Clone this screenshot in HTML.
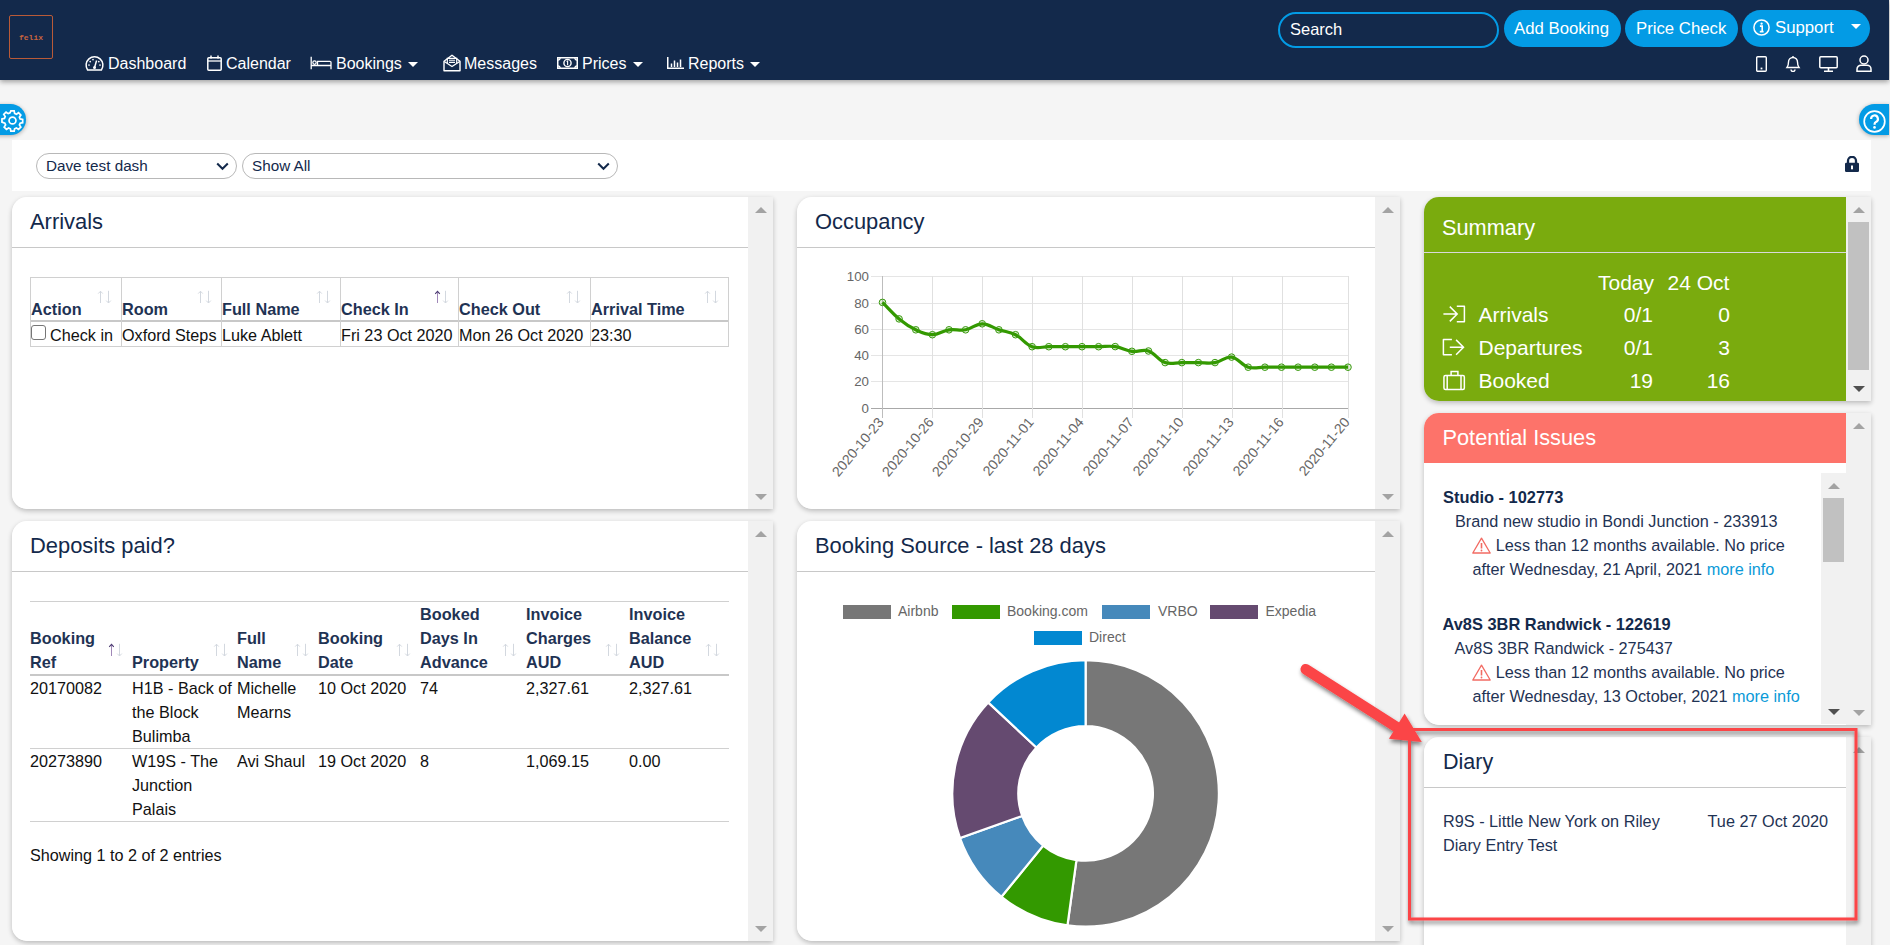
<!DOCTYPE html>
<html><head><meta charset="utf-8">
<style>
*{box-sizing:border-box}
html,body{margin:0;padding:0}
body{width:1890px;height:945px;overflow:hidden;background:#f5f5f5;font-family:"Liberation Sans",sans-serif;position:relative;color:#111}
.a{position:absolute;white-space:nowrap}
#hdr{position:absolute;left:0;top:0;width:1889px;height:80px;background:#13294b;box-shadow:0 2px 5px rgba(0,0,0,.35)}
.nav{position:absolute;top:54px;height:20px;line-height:20px;font-size:16px;color:#fff}
.btn{position:absolute;top:10px;height:37px;border-radius:19px;background:#039be5;color:#fff;font-size:16.75px;line-height:37px}
.caret{position:absolute;width:0;height:0;border-left:5px solid transparent;border-right:5px solid transparent;border-top:5px solid #fff}
.pnl{position:absolute;box-shadow:0 2px 5px rgba(0,0,0,.24);border-radius:15px 0 0 15px}
.pc{position:absolute;left:0;top:0;bottom:0;background:#fff;border-radius:15px 0 0 15px;overflow:hidden}
.sb{position:absolute;top:0;bottom:0;right:0;width:25px;background:#f1f1f1}
.up{position:absolute;left:6.5px;top:9.5px;width:0;height:0;border-left:6px solid transparent;border-right:6px solid transparent;border-bottom:6.5px solid #a3a3a3}
.dn{position:absolute;left:6.5px;bottom:9.5px;width:0;height:0;border-left:6px solid transparent;border-right:6px solid transparent;border-top:6.5px solid #a3a3a3}
.ph{position:absolute;left:0;right:0;top:0;height:51px;border-bottom:1px solid #c8c8c8}
.pt{position:absolute;left:18px;font-size:21.9px;line-height:22px;color:#13294b}
.th{position:absolute;font-weight:bold;font-size:16.25px;line-height:24px;color:#1f3354;margin-top:1px}
.td{position:absolute;font-size:16.2px;line-height:24px;color:#111;margin-top:1px}
.hl{position:absolute;height:1px;background:#d0d0d0}
.vl{position:absolute;width:1px;background:#d0d0d0}
</style></head><body>

<div id="hdr">
  <!-- logo -->
  <div class="a" style="left:9px;top:15px;width:44px;height:44px;border:1.6px solid #b95a38;border-radius:2px"></div>
  <div class="a" style="left:9px;top:31.5px;width:44px;text-align:center;font-family:'Liberation Mono',monospace;font-size:8px;line-height:12px;color:#c8643f;font-weight:bold">felix</div>

  <!-- nav -->
  <svg class="a" style="left:85px;top:55px" width="19" height="16" viewBox="0 0 19 16"><path d="M2.6 15 A8.4 8.4 0 1 1 16.4 15 Z" fill="none" stroke="#fff" stroke-width="1.5" stroke-linejoin="round"/><path d="M9.5 12.6 L11.6 5.5" stroke="#fff" stroke-width="1.5"/><circle cx="9.5" cy="12.6" r="1.5" fill="#fff"/><circle cx="5.2" cy="6.6" r=".85" fill="#fff"/><circle cx="8" cy="4.6" r=".85" fill="#fff"/><circle cx="4" cy="10" r=".85" fill="#fff"/><circle cx="15" cy="10" r=".85" fill="#fff"/><circle cx="13.8" cy="6.6" r=".85" fill="#fff"/></svg>
  <div class="nav" style="left:108px">Dashboard</div>
  <svg class="a" style="left:207px;top:55px" width="15" height="16" viewBox="0 0 15 16"><rect x=".8" y="2.8" width="13.4" height="12.4" rx="1" fill="none" stroke="#fff" stroke-width="1.5"/><path d="M1 6h13" stroke="#fff" stroke-width="1.3"/><path d="M4 .5v3M11 .5v3" stroke="#fff" stroke-width="1.5"/></svg>
  <div class="nav" style="left:226px">Calendar</div>
  <svg class="a" style="left:310px;top:56px" width="22" height="14" viewBox="0 0 22 14"><path d="M1.2 .8v12.5M1.2 9.5h19.8M21 13.3V6.5a1.2 1.2 0 0 0-1.2-1.2H7.5v4.2" fill="none" stroke="#fff" stroke-width="1.3"/><circle cx="4.5" cy="6.6" r="1.7" fill="none" stroke="#fff" stroke-width="1.2"/></svg>
  <div class="nav" style="left:336px">Bookings</div>
  <div class="caret" style="left:408px;top:62px"></div>
  <svg class="a" style="left:443px;top:54px" width="18" height="18" viewBox="0 0 18 18"><path d="M1 7.2 L9 1.2 L17 7.2 V16.8 H1 Z" fill="none" stroke="#fff" stroke-width="1.4" stroke-linejoin="round"/><path d="M1.3 7.5 L9 12.5 L16.7 7.5" fill="none" stroke="#fff" stroke-width="1.3"/><path d="M4.3 9.3 V4.3 H13.7 V9.3" fill="none" stroke="#fff" stroke-width="1.2"/><path d="M6 6.2H12M6 8.4H12" stroke="#fff" stroke-width="1.1"/></svg>
  <div class="nav" style="left:464px">Messages</div>
  <svg class="a" style="left:557px;top:57px" width="21" height="12" viewBox="0 0 21 12"><rect x=".75" y=".75" width="19.5" height="10.5" fill="none" stroke="#fff" stroke-width="1.5"/><path d="M.8 3.2A2.5 2.5 0 0 0 3.2 .8M17.8 .8A2.5 2.5 0 0 0 20.2 3.2M.8 8.8A2.5 2.5 0 0 1 3.2 11.2M17.8 11.2A2.5 2.5 0 0 1 20.2 8.8" fill="none" stroke="#fff" stroke-width="1.2"/><circle cx="10.5" cy="6" r="3.6" fill="none" stroke="#fff" stroke-width="1.4"/><path d="M9.6 4.6l1-.6V8.2" fill="none" stroke="#fff" stroke-width="1.1"/></svg>
  <div class="nav" style="left:582px">Prices</div>
  <div class="caret" style="left:633px;top:62px"></div>
  <svg class="a" style="left:667px;top:57px" width="17" height="12" viewBox="0 0 17 12"><path d="M.75 0v11.25H17" fill="none" stroke="#fff" stroke-width="1.5"/><path d="M4.5 10V6.5M7.5 10V3.5M10.5 10V5.5M13.5 10V2.5" stroke="#fff" stroke-width="1.5"/></svg>
  <div class="nav" style="left:688px">Reports</div>
  <div class="caret" style="left:750px;top:62px"></div>

  <!-- right side -->
  <div class="a" style="left:1278px;top:12px;width:221px;height:36px;border:2px solid #039be5;border-radius:18px"></div>
  <div class="a" style="left:1290px;top:19px;font-size:16.5px;line-height:20px;color:#fff">Search</div>
  <div class="btn" style="left:1504px;width:117px;padding-left:10px">Add Booking</div>
  <div class="btn" style="left:1625px;width:113px;padding-left:11px">Price Check</div>
  <div class="btn" style="left:1742px;width:128px"></div>
  <svg class="a" style="left:1753px;top:19.3px" width="17" height="17" viewBox="0 0 17 17"><circle cx="8.5" cy="8.5" r="7.6" fill="none" stroke="#fff" stroke-width="1.5"/><path d="M6.9 7.1H9.2V12.6M6.8 12.6H10.6" fill="none" stroke="#fff" stroke-width="1.6"/><circle cx="8.6" cy="4.7" r="1.15" fill="#fff"/></svg>
  <div class="a" style="left:1775px;top:18px;font-size:16.75px;line-height:20px;color:#fff">Support</div>
  <div class="caret" style="left:1851px;top:24px"></div>

  <svg class="a" style="left:1756px;top:56px" width="11" height="16" viewBox="0 0 11 16"><rect x=".7" y=".7" width="9.6" height="14.6" rx="1" fill="none" stroke="#fff" stroke-width="1.4"/><rect x="4.6" y="11.6" width="1.8" height="1.8" fill="#fff"/></svg>
  <svg class="a" style="left:1785px;top:55px" width="16" height="17" viewBox="0 0 16 17"><path d="M2 12.5c1.2-1.5 1.5-3 1.5-5.5a4.5 4.5 0 0 1 9 0c0 2.5.3 4 1.5 5.5Z" fill="none" stroke="#fff" stroke-width="1.4"/><path d="M6 14.5a2 2 0 0 0 4 0" fill="none" stroke="#fff" stroke-width="1.4"/><path d="M8 1v1.5" stroke="#fff" stroke-width="1.4"/></svg>
  <svg class="a" style="left:1819px;top:56px" width="19" height="16" viewBox="0 0 19 16"><rect x=".8" y=".8" width="17.4" height="11" rx="1" fill="none" stroke="#fff" stroke-width="1.5"/><path d="M9.5 12v3M5 15.2h9" stroke="#fff" stroke-width="1.6"/></svg>
  <svg class="a" style="left:1856px;top:55px" width="16" height="17" viewBox="0 0 16 17"><circle cx="8" cy="5" r="4" fill="none" stroke="#fff" stroke-width="1.5"/><path d="M1 16.2v-2a4 4 0 0 1 4-4h6a4 4 0 0 1 4 4v2Z" fill="none" stroke="#fff" stroke-width="1.5"/></svg>
</div>

<!-- gear & help -->
<div class="a" style="left:-16px;top:104px;width:42px;height:31px;border-radius:16px;background:#039be5;box-shadow:0 1px 4px rgba(0,0,0,.3)"></div>
<svg class="a" style="left:0.5px;top:109px" width="23" height="23" viewBox="0 0 24 24"><path fill="none" stroke="#fff" stroke-width="1.8" d="M10.3 2h3.4l.5 2.6 1.9.8 2.2-1.5 2.4 2.4-1.5 2.2.8 1.9 2.6.5v3.4l-2.6.5-.8 1.9 1.5 2.2-2.4 2.4-2.2-1.5-1.9.8-.5 2.6h-3.4l-.5-2.6-1.9-.8-2.2 1.5-2.4-2.4 1.5-2.2-.8-1.9L1 13.7v-3.4l2.6-.5.8-1.9-1.5-2.2 2.4-2.4 2.2 1.5 1.9-.8Z"/><circle cx="12" cy="12" r="3.6" fill="none" stroke="#fff" stroke-width="1.8"/></svg>
<div class="a" style="left:1859px;top:104px;width:30px;height:31px;border-radius:16px 0 0 16px;background:#039be5;box-shadow:0 1px 4px rgba(0,0,0,.3)"></div>
<svg class="a" style="left:1863px;top:109.5px" width="23" height="23" viewBox="0 0 23 23"><circle cx="11.5" cy="11.5" r="10.3" fill="none" stroke="#fff" stroke-width="1.7"/><path d="M8.1 8.9a3.4 3.4 0 1 1 4.9 3c-.9.5-1.4 1-1.4 2v.9" fill="none" stroke="#fff" stroke-width="2.2"/><circle cx="11.5" cy="17.4" r="1.3" fill="#fff"/></svg>

<!-- filter bar -->
<div class="a" style="left:12px;top:140px;width:1859px;height:51px;background:#fff"></div>
<div class="a" style="left:36px;top:153px;width:201px;height:26px;border:1px solid #b8b8b8;border-radius:13px;background:#fff"></div>
<div class="a" style="left:46px;top:156px;font-size:15.25px;line-height:20px;color:#13294b">Dave test dash</div>
<svg class="a" style="left:216px;top:162px" width="13" height="9" viewBox="0 0 13 9"><path d="M1.2 1.5l5.3 5.3 5.3-5.3" fill="none" stroke="#13294b" stroke-width="2"/></svg>
<div class="a" style="left:242px;top:153px;width:376px;height:26px;border:1px solid #b8b8b8;border-radius:13px;background:#fff"></div>
<div class="a" style="left:252px;top:156px;font-size:15.25px;line-height:20px;color:#13294b">Show All</div>
<svg class="a" style="left:597px;top:162px" width="13" height="9" viewBox="0 0 13 9"><path d="M1.2 1.5l5.3 5.3 5.3-5.3" fill="none" stroke="#13294b" stroke-width="2"/></svg>
<svg class="a" style="left:1845px;top:156px" width="14" height="16" viewBox="0 0 14 16"><path d="M3 7V4.8a4 4 0 0 1 8 0V7" fill="none" stroke="#13294b" stroke-width="2.3"/><rect x="0" y="6.8" width="14" height="9.2" rx="1.2" fill="#13294b"/><rect x="6" y="9.5" width="2" height="3.8" fill="#fff"/></svg>

<div class="pnl" style="left:12px;top:197px;width:761px;height:312px"><div class="pc" style="width:736px">
<div class="ph"><div class="pt" style="top:14px">Arrivals</div></div>
<div class="hl" style="left:18px;top:80px;width:699px"></div>
<div class="hl" style="left:18px;top:123px;width:699px;height:2px;background:#c8c8c8"></div>
<div class="hl" style="left:18px;top:149px;width:699px"></div>
<div class="vl" style="left:18px;top:80px;height:70px"></div>
<div class="vl" style="left:109px;top:80px;height:70px"></div>
<div class="vl" style="left:209px;top:80px;height:70px"></div>
<div class="vl" style="left:328px;top:80px;height:70px"></div>
<div class="vl" style="left:446px;top:80px;height:70px"></div>
<div class="vl" style="left:578px;top:80px;height:70px"></div>
<div class="vl" style="left:716px;top:80px;height:70px"></div>
<div class="th" style="left:19px;top:99px">Action</div>
<svg class="a" style="left:85px;top:93px" width="15" height="14" viewBox="0 0 15 14"><path d="M3.5 13V1.2M1.2 3.6l2.3-2.4 2.3 2.4" fill="none" stroke="#d3d8df" stroke-width="1"/><path d="M11.5 .8v12.2M9.2 10.6l2.3 2.4 2.3-2.4" fill="none" stroke="#d3d8df" stroke-width="1"/></svg>
<div class="th" style="left:110px;top:99px">Room</div>
<svg class="a" style="left:185px;top:93px" width="15" height="14" viewBox="0 0 15 14"><path d="M3.5 13V1.2M1.2 3.6l2.3-2.4 2.3 2.4" fill="none" stroke="#d3d8df" stroke-width="1"/><path d="M11.5 .8v12.2M9.2 10.6l2.3 2.4 2.3-2.4" fill="none" stroke="#d3d8df" stroke-width="1"/></svg>
<div class="th" style="left:210px;top:99px">Full Name</div>
<svg class="a" style="left:304px;top:93px" width="15" height="14" viewBox="0 0 15 14"><path d="M3.5 13V1.2M1.2 3.6l2.3-2.4 2.3 2.4" fill="none" stroke="#d3d8df" stroke-width="1"/><path d="M11.5 .8v12.2M9.2 10.6l2.3 2.4 2.3-2.4" fill="none" stroke="#d3d8df" stroke-width="1"/></svg>
<div class="th" style="left:329px;top:99px">Check In</div>
<svg class="a" style="left:422px;top:93px" width="15" height="14" viewBox="0 0 15 14"><path d="M3.5 13V1.6" fill="none" stroke="#a088b8" stroke-width="1"/><path d="M1.2 3.8l2.3-2.4 2.3 2.4" fill="none" stroke="#4a3a70" stroke-width="1.1"/><path d="M11.5 .8v12.2M9.2 10.6l2.3 2.4 2.3-2.4" fill="none" stroke="#d3d8df" stroke-width="1"/></svg>
<div class="th" style="left:447px;top:99px">Check Out</div>
<svg class="a" style="left:554px;top:93px" width="15" height="14" viewBox="0 0 15 14"><path d="M3.5 13V1.2M1.2 3.6l2.3-2.4 2.3 2.4" fill="none" stroke="#d3d8df" stroke-width="1"/><path d="M11.5 .8v12.2M9.2 10.6l2.3 2.4 2.3-2.4" fill="none" stroke="#d3d8df" stroke-width="1"/></svg>
<div class="th" style="left:579px;top:99px">Arrival Time</div>
<svg class="a" style="left:692px;top:93px" width="15" height="14" viewBox="0 0 15 14"><path d="M3.5 13V1.2M1.2 3.6l2.3-2.4 2.3 2.4" fill="none" stroke="#d3d8df" stroke-width="1"/><path d="M11.5 .8v12.2M9.2 10.6l2.3 2.4 2.3-2.4" fill="none" stroke="#d3d8df" stroke-width="1"/></svg>
<div class="a" style="left:19px;top:128px;width:15px;height:15px;border:1px solid #767676;border-radius:3px;background:#fff"></div>
<div class="td" style="left:38px;top:125px">Check in</div>
<div class="td" style="left:110px;top:125px">Oxford Steps</div>
<div class="td" style="left:210px;top:125px">Luke Ablett</div>
<div class="td" style="left:329px;top:125px">Fri 23 Oct 2020</div>
<div class="td" style="left:447px;top:125px">Mon 26 Oct 2020</div>
<div class="td" style="left:579px;top:125px">23:30</div>
</div><div class="sb" style="left:736px"><div class="up"></div><div class="dn"></div></div></div>
<div class="pnl" style="left:12px;top:521px;width:761px;height:420px"><div class="pc" style="width:736px">
<div class="ph"><div class="pt" style="top:14px">Deposits paid?</div></div>
<div class="hl" style="left:18px;top:80px;width:699px"></div>
<div class="hl" style="left:18px;top:153px;width:699px;height:2px;background:#c8c8c8"></div>
<div class="hl" style="left:18px;top:227px;width:699px"></div>
<div class="hl" style="left:18px;top:300px;width:699px"></div>
<div class="th" style="margin-top:0;left:18px;top:105px">Booking</div>
<div class="th" style="margin-top:0;left:18px;top:129px">Ref</div>
<svg class="a" style="left:96px;top:122px" width="15" height="14" viewBox="0 0 15 14"><path d="M3.5 13V1.6" fill="none" stroke="#a088b8" stroke-width="1"/><path d="M1.2 3.8l2.3-2.4 2.3 2.4" fill="none" stroke="#4a3a70" stroke-width="1.1"/><path d="M11.5 .8v12.2M9.2 10.6l2.3 2.4 2.3-2.4" fill="none" stroke="#d3d8df" stroke-width="1"/></svg>
<div class="th" style="margin-top:0;left:120px;top:129px">Property</div>
<svg class="a" style="left:201px;top:122px" width="15" height="14" viewBox="0 0 15 14"><path d="M3.5 13V1.2M1.2 3.6l2.3-2.4 2.3 2.4" fill="none" stroke="#d3d8df" stroke-width="1"/><path d="M11.5 .8v12.2M9.2 10.6l2.3 2.4 2.3-2.4" fill="none" stroke="#d3d8df" stroke-width="1"/></svg>
<div class="th" style="margin-top:0;left:225px;top:105px">Full</div>
<div class="th" style="margin-top:0;left:225px;top:129px">Name</div>
<svg class="a" style="left:282px;top:122px" width="15" height="14" viewBox="0 0 15 14"><path d="M3.5 13V1.2M1.2 3.6l2.3-2.4 2.3 2.4" fill="none" stroke="#d3d8df" stroke-width="1"/><path d="M11.5 .8v12.2M9.2 10.6l2.3 2.4 2.3-2.4" fill="none" stroke="#d3d8df" stroke-width="1"/></svg>
<div class="th" style="margin-top:0;left:306px;top:105px">Booking</div>
<div class="th" style="margin-top:0;left:306px;top:129px">Date</div>
<svg class="a" style="left:384px;top:122px" width="15" height="14" viewBox="0 0 15 14"><path d="M3.5 13V1.2M1.2 3.6l2.3-2.4 2.3 2.4" fill="none" stroke="#d3d8df" stroke-width="1"/><path d="M11.5 .8v12.2M9.2 10.6l2.3 2.4 2.3-2.4" fill="none" stroke="#d3d8df" stroke-width="1"/></svg>
<div class="th" style="margin-top:0;left:408px;top:81px">Booked</div>
<div class="th" style="margin-top:0;left:408px;top:105px">Days In</div>
<div class="th" style="margin-top:0;left:408px;top:129px">Advance</div>
<svg class="a" style="left:490px;top:122px" width="15" height="14" viewBox="0 0 15 14"><path d="M3.5 13V1.2M1.2 3.6l2.3-2.4 2.3 2.4" fill="none" stroke="#d3d8df" stroke-width="1"/><path d="M11.5 .8v12.2M9.2 10.6l2.3 2.4 2.3-2.4" fill="none" stroke="#d3d8df" stroke-width="1"/></svg>
<div class="th" style="margin-top:0;left:514px;top:81px">Invoice</div>
<div class="th" style="margin-top:0;left:514px;top:105px">Charges</div>
<div class="th" style="margin-top:0;left:514px;top:129px">AUD</div>
<svg class="a" style="left:593px;top:122px" width="15" height="14" viewBox="0 0 15 14"><path d="M3.5 13V1.2M1.2 3.6l2.3-2.4 2.3 2.4" fill="none" stroke="#d3d8df" stroke-width="1"/><path d="M11.5 .8v12.2M9.2 10.6l2.3 2.4 2.3-2.4" fill="none" stroke="#d3d8df" stroke-width="1"/></svg>
<div class="th" style="margin-top:0;left:617px;top:81px">Invoice</div>
<div class="th" style="margin-top:0;left:617px;top:105px">Balance</div>
<div class="th" style="margin-top:0;left:617px;top:129px">AUD</div>
<svg class="a" style="left:693px;top:122px" width="15" height="14" viewBox="0 0 15 14"><path d="M3.5 13V1.2M1.2 3.6l2.3-2.4 2.3 2.4" fill="none" stroke="#d3d8df" stroke-width="1"/><path d="M11.5 .8v12.2M9.2 10.6l2.3 2.4 2.3-2.4" fill="none" stroke="#d3d8df" stroke-width="1"/></svg>
<div class="td" style="margin-top:0;left:18px;top:155px">20170082</div>
<div class="td" style="margin-top:0;left:120px;top:155px">H1B - Back of</div>
<div class="td" style="margin-top:0;left:120px;top:179px">the Block</div>
<div class="td" style="margin-top:0;left:120px;top:203px">Bulimba</div>
<div class="td" style="margin-top:0;left:225px;top:155px">Michelle</div>
<div class="td" style="margin-top:0;left:225px;top:179px">Mearns</div>
<div class="td" style="margin-top:0;left:306px;top:155px">10 Oct 2020</div>
<div class="td" style="margin-top:0;left:408px;top:155px">74</div>
<div class="td" style="margin-top:0;left:514px;top:155px">2,327.61</div>
<div class="td" style="margin-top:0;left:617px;top:155px">2,327.61</div>
<div class="td" style="margin-top:0;left:18px;top:228px">20273890</div>
<div class="td" style="margin-top:0;left:120px;top:228px">W19S - The</div>
<div class="td" style="margin-top:0;left:120px;top:252px">Junction</div>
<div class="td" style="margin-top:0;left:120px;top:276px">Palais</div>
<div class="td" style="margin-top:0;left:225px;top:228px">Avi Shaul</div>
<div class="td" style="margin-top:0;left:306px;top:228px">19 Oct 2020</div>
<div class="td" style="margin-top:0;left:408px;top:228px">8</div>
<div class="td" style="margin-top:0;left:514px;top:228px">1,069.15</div>
<div class="td" style="margin-top:0;left:617px;top:228px">0.00</div>
<div class="td" style="margin-top:0;left:18px;top:322px">Showing 1 to 2 of 2 entries</div>
</div><div class="sb" style="left:736px"><div class="up"></div><div class="dn"></div></div></div>
<div class="pnl" style="left:797px;top:197px;width:603px;height:312px"><div class="pc" style="width:578px">
<div class="ph"><div class="pt" style="top:14px">Occupancy</div></div>
</div><div class="sb" style="left:578px"><div class="up"></div><div class="dn"></div></div></div>
<div class="pnl" style="left:797px;top:521px;width:603px;height:420px"><div class="pc" style="width:578px">
<div class="ph"><div class="pt" style="top:14px">Booking Source - last 28 days</div></div>
</div><div class="sb" style="left:578px"><div class="up"></div><div class="dn"></div></div></div>
<div class="pnl" style="left:1424px;top:197px;width:447px;height:204px"><div class="pc" style="width:422px;background:#7aab0e;border-radius:15px 0 0 15px">
<div class="a" style="left:18px;top:19.3px;font-size:21.75px;line-height:24px;color:#fff">Summary</div>
<div class="a" style="left:0;top:55px;width:422px;height:1px;background:#d9d9d9"></div>
</div><div class="sb" style="left:422px"><div class="up"></div><div class="a" style="left:2px;top:25px;width:21px;height:148px;background:#c1c1c1"></div><div class="dn" style="border-top-color:#505050"></div></div></div>
<div class="pnl" style="left:1424px;top:413px;width:447px;height:312px"><div class="pc" style="width:422px;border-radius:15px 0 0 15px">
<div class="a" style="left:0;top:0;width:422px;height:50px;background:#fd736a"></div>
<div class="a" style="left:18.5px;top:13px;font-size:21.75px;line-height:24px;color:#fff">Potential Issues</div>
<div class="a" style="left:397px;top:60px;width:25px;height:251px;background:#f1f1f1"><div class="up" style="left:7px;top:10px"></div><div class="a" style="left:2px;top:25px;width:21px;height:64px;background:#c1c1c1"></div><div class="dn" style="border-top-color:#505050;bottom:9px"></div></div>
</div><div class="sb" style="left:422px"><div class="up"></div><div class="dn" style="bottom:9px"></div></div></div>
<div class="pnl" style="left:1424px;top:737px;width:447px;height:240px"><div class="pc" style="width:422px;border-radius:15px 0 0 15px">
<div class="ph" style="height:51px"></div>
</div><div class="sb" style="left:422px"><div class="up"></div></div></div>
<!--PANELS-->
<div class="a" style="left:1598px;top:270.5px;font-size:21px;line-height:24px;color:#fff;">Today</div>
<div class="a" style="left:1667.5px;top:270.5px;font-size:21px;line-height:24px;color:#fff;">24 Oct</div>
<div class="a" style="left:1478.5px;top:303.0px;font-size:21px;line-height:24px;color:#fff;">Arrivals</div>
<div class="a" style="right:237px;top:303.0px;font-size:21px;line-height:24px;color:#fff;">0/1</div>
<div class="a" style="right:160px;top:303.0px;font-size:21px;line-height:24px;color:#fff;">0</div>
<div class="a" style="left:1478.5px;top:336.1px;font-size:21px;line-height:24px;color:#fff;">Departures</div>
<div class="a" style="right:237px;top:336.1px;font-size:21px;line-height:24px;color:#fff;">0/1</div>
<div class="a" style="right:160px;top:336.1px;font-size:21px;line-height:24px;color:#fff;">3</div>
<div class="a" style="left:1478.5px;top:369.1px;font-size:21px;line-height:24px;color:#fff;">Booked</div>
<div class="a" style="right:237px;top:369.1px;font-size:21px;line-height:24px;color:#fff;">19</div>
<div class="a" style="right:160px;top:369.1px;font-size:21px;line-height:24px;color:#fff;">16</div>
<svg class="a" style="left:1442px;top:304px" width="24" height="20" viewBox="0 0 24 20"><path d="M1.4 10H15.3M7.8 2.6 15.2 10 7.8 17.4" fill="none" stroke="#fff" stroke-width="1.5"/><path d="M14.8 2.2H22.4V17.8H14.8" fill="none" stroke="#fff" stroke-width="1.5" stroke-linejoin="round"/></svg>
<svg class="a" style="left:1442px;top:337px" width="24" height="20" viewBox="0 0 24 20"><path d="M9.9 2.4H1.4V17.7H9.9" fill="none" stroke="#fff" stroke-width="1.5" stroke-linejoin="round"/><path d="M7.8 10.3H21.8M14.1 2.9 21.5 10.3 14.1 17.7" fill="none" stroke="#fff" stroke-width="1.5"/></svg>
<svg class="a" style="left:1442px;top:369px" width="24" height="22" viewBox="0 0 24 22"><rect x="1.95" y="6.6" width="20.4" height="13.8" rx="1.5" fill="none" stroke="#fff" stroke-width="1.5"/><path d="M9.1 6.6V2.4H15.9V6.6M5.2 7V20.3M19 7V20.3" fill="none" stroke="#fff" stroke-width="1.5"/></svg>
<div class="a" style="left:1443px;top:485.2px;font-size:16.4px;line-height:24px;color:#13294b;font-weight:bold;">Studio - 102773</div>
<div class="a" style="left:1455px;top:509.3px;font-size:16.25px;line-height:24px;color:#1f3354;">Brand new studio in Bondi Junction - 233913</div>
<div class="a" style="left:1495.8px;top:533.4px;font-size:16.25px;line-height:24px;color:#1f3354;">Less than 12 months available. No price</div>
<div class="a" style="left:1472.4px;top:557.0px;font-size:16.25px;line-height:24px;color:#1f3354;">after Wednesday, 21 April, 2021 <span style="color:#0b9ad8">more info</span></div>
<div class="a" style="left:1442.5px;top:611.8px;font-size:16.4px;line-height:24px;color:#13294b;font-weight:bold;">Av8S 3BR Randwick - 122619</div>
<div class="a" style="left:1454.5px;top:635.9px;font-size:16.25px;line-height:24px;color:#1f3354;">Av8S 3BR Randwick - 275437</div>
<div class="a" style="left:1495.8px;top:660.0px;font-size:16.25px;line-height:24px;color:#1f3354;">Less than 12 months available. No price</div>
<div class="a" style="left:1472.4px;top:684.1px;font-size:16.25px;line-height:24px;color:#1f3354;">after Wednesday, 13 October, 2021 <span style="color:#0b9ad8">more info</span></div>
<svg class="a" style="left:1472px;top:537px" width="19" height="17" viewBox="0 0 19 17"><path d="M9.5 1.2 18.2 16H.8Z" fill="none" stroke="#f26b63" stroke-width="1.3" stroke-linejoin="round"/><path d="M9.5 6v5.5" stroke="#f26b63" stroke-width="1.6"/><circle cx="9.5" cy="13.5" r=".9" fill="#f26b63"/></svg>
<svg class="a" style="left:1472px;top:663.5px" width="19" height="17" viewBox="0 0 19 17"><path d="M9.5 1.2 18.2 16H.8Z" fill="none" stroke="#f26b63" stroke-width="1.3" stroke-linejoin="round"/><path d="M9.5 6v5.5" stroke="#f26b63" stroke-width="1.6"/><circle cx="9.5" cy="13.5" r=".9" fill="#f26b63"/></svg>
<div class="a" style="left:1443px;top:749.6px;font-size:21.5px;line-height:24px;color:#13294b;">Diary</div>
<div class="a" style="left:1443px;top:809.2px;font-size:16.25px;line-height:24px;color:#1f3354;">R9S - Little New York on Riley</div>
<div class="a" style="right:62px;top:809.2px;font-size:16.25px;line-height:24px;color:#1f3354;">Tue 27 Oct 2020</div>
<div class="a" style="left:1443px;top:833.0px;font-size:16.25px;line-height:24px;color:#1f3354;">Diary Entry Test</div>
<svg class="a" style="left:0;top:0" width="1890" height="945" viewBox="0 0 1890 945">
<defs><filter id="ds" x="-20%" y="-20%" width="140%" height="140%"><feGaussianBlur in="SourceAlpha" stdDeviation="2.3"/><feOffset dx="1" dy="3" result="b"/><feComponentTransfer><feFuncA type="linear" slope="0.5"/></feComponentTransfer><feMerge><feMergeNode/><feMergeNode in="SourceGraphic"/></feMerge></filter></defs>
<g filter="url(#ds)">
<rect x="1409.5" y="729.5" width="446.5" height="189.5" fill="none" stroke="#fb4446" stroke-width="3"/>
<line x1="1305.7" y1="669.2" x2="1398" y2="728" stroke="#fb4446" stroke-width="10.5" stroke-linecap="round"/>
<path d="M1404.6 713.4 L1388.9 738.7 L1421.8 742 Z" fill="#fb4446"/>
</g></svg>
<svg class="a" style="left:0;top:0" width="1890" height="945" viewBox="0 0 1890 945">
<line x1="871" y1="408.5" x2="1348.5" y2="408.5" stroke="#a8a8a8" stroke-width="1"/>
<text x="869" y="413.1" text-anchor="end" font-size="13.3" fill="#666">0</text>
<line x1="871" y1="381.5" x2="1348.5" y2="381.5" stroke="#e5e5e5" stroke-width="1"/>
<text x="869" y="386.1" text-anchor="end" font-size="13.3" fill="#666">20</text>
<line x1="871" y1="355.5" x2="1348.5" y2="355.5" stroke="#e5e5e5" stroke-width="1"/>
<text x="869" y="360.1" text-anchor="end" font-size="13.3" fill="#666">40</text>
<line x1="871" y1="329.5" x2="1348.5" y2="329.5" stroke="#e5e5e5" stroke-width="1"/>
<text x="869" y="334.1" text-anchor="end" font-size="13.3" fill="#666">60</text>
<line x1="871" y1="303.5" x2="1348.5" y2="303.5" stroke="#e5e5e5" stroke-width="1"/>
<text x="869" y="308.1" text-anchor="end" font-size="13.3" fill="#666">80</text>
<line x1="871" y1="276.5" x2="1348.5" y2="276.5" stroke="#e5e5e5" stroke-width="1"/>
<text x="869" y="281.1" text-anchor="end" font-size="13.3" fill="#666">100</text>
<line x1="882.5" y1="276" x2="882.5" y2="418" stroke="#bdbdbd" stroke-width="1"/>
<text x="881.5" y="424" text-anchor="end" font-size="14" fill="#666" transform="rotate(-50 881.5 420)">2020-10-23</text>
<line x1="932.5" y1="276" x2="932.5" y2="418" stroke="#e0e0e0" stroke-width="1"/>
<text x="931.5" y="424" text-anchor="end" font-size="14" fill="#666" transform="rotate(-50 931.5 420)">2020-10-26</text>
<line x1="982.5" y1="276" x2="982.5" y2="418" stroke="#e0e0e0" stroke-width="1"/>
<text x="981.5" y="424" text-anchor="end" font-size="14" fill="#666" transform="rotate(-50 981.5 420)">2020-10-29</text>
<line x1="1032.5" y1="276" x2="1032.5" y2="418" stroke="#e0e0e0" stroke-width="1"/>
<text x="1031.5" y="424" text-anchor="end" font-size="14" fill="#666" transform="rotate(-50 1031.5 420)">2020-11-01</text>
<line x1="1082.5" y1="276" x2="1082.5" y2="418" stroke="#e0e0e0" stroke-width="1"/>
<text x="1081.5" y="424" text-anchor="end" font-size="14" fill="#666" transform="rotate(-50 1081.5 420)">2020-11-04</text>
<line x1="1132.5" y1="276" x2="1132.5" y2="418" stroke="#e0e0e0" stroke-width="1"/>
<text x="1131.5" y="424" text-anchor="end" font-size="14" fill="#666" transform="rotate(-50 1131.5 420)">2020-11-07</text>
<line x1="1182.5" y1="276" x2="1182.5" y2="418" stroke="#e0e0e0" stroke-width="1"/>
<text x="1181.5" y="424" text-anchor="end" font-size="14" fill="#666" transform="rotate(-50 1181.5 420)">2020-11-10</text>
<line x1="1232.5" y1="276" x2="1232.5" y2="418" stroke="#e0e0e0" stroke-width="1"/>
<text x="1231.5" y="424" text-anchor="end" font-size="14" fill="#666" transform="rotate(-50 1231.5 420)">2020-11-13</text>
<line x1="1282.5" y1="276" x2="1282.5" y2="418" stroke="#e0e0e0" stroke-width="1"/>
<text x="1281.5" y="424" text-anchor="end" font-size="14" fill="#666" transform="rotate(-50 1281.5 420)">2020-11-16</text>
<line x1="1348.5" y1="276" x2="1348.5" y2="418" stroke="#e0e0e0" stroke-width="1"/>
<text x="1347.5" y="424" text-anchor="end" font-size="14" fill="#666" transform="rotate(-50 1347.5 420)">2020-11-20</text>
<path d="M882.50,302.40 C889.14,309.00 891.91,312.98 899.10,318.90 C905.23,323.94 908.67,326.42 915.80,329.80 C921.99,332.74 925.76,334.70 932.40,334.70 C939.04,334.70 942.22,330.80 949.00,329.80 C955.50,328.84 959.16,330.96 965.60,329.80 C972.44,328.56 975.56,323.80 982.20,323.80 C988.88,323.80 992.16,327.59 998.90,329.80 C1005.48,331.95 1009.42,331.60 1015.50,334.70 C1022.70,338.36 1024.76,344.06 1032.10,346.70 C1038.08,348.86 1042.12,346.70 1048.80,346.70 C1055.44,346.70 1058.76,346.70 1065.40,346.70 C1072.04,346.70 1075.36,346.70 1082.00,346.70 C1088.64,346.70 1091.96,346.72 1098.60,346.70 C1105.24,346.68 1108.69,345.70 1115.20,346.60 C1122.01,347.54 1125.09,350.40 1131.90,351.30 C1138.41,352.16 1142.52,348.96 1148.50,351.00 C1155.80,353.48 1157.80,360.06 1165.10,362.60 C1171.12,364.70 1175.12,362.60 1181.80,362.60 C1188.44,362.60 1191.76,362.60 1198.40,362.60 C1205.04,362.60 1208.53,363.67 1215.00,362.60 C1221.81,361.47 1225.31,356.23 1231.60,357.10 C1238.59,358.07 1241.04,365.03 1248.20,367.20 C1254.36,369.07 1258.22,367.20 1264.90,367.20 C1271.54,367.20 1274.86,367.20 1281.50,367.20 C1288.14,367.20 1291.46,367.20 1298.10,367.20 C1304.78,367.20 1308.12,367.20 1314.80,367.20 C1321.44,367.20 1324.76,367.20 1331.40,367.20 C1338.04,367.20 1341.36,367.20 1348.00,367.20" fill="none" stroke="#339900" stroke-width="3.2" stroke-linejoin="round"/>
<circle cx="882.5" cy="302.4" r="3.3" fill="rgba(51,153,0,.15)" stroke="#3a9a10" stroke-width="1"/>
<circle cx="899.1" cy="318.9" r="3.3" fill="rgba(51,153,0,.15)" stroke="#3a9a10" stroke-width="1"/>
<circle cx="915.8" cy="329.8" r="3.3" fill="rgba(51,153,0,.15)" stroke="#3a9a10" stroke-width="1"/>
<circle cx="932.4" cy="334.7" r="3.3" fill="rgba(51,153,0,.15)" stroke="#3a9a10" stroke-width="1"/>
<circle cx="949.0" cy="329.8" r="3.3" fill="rgba(51,153,0,.15)" stroke="#3a9a10" stroke-width="1"/>
<circle cx="965.6" cy="329.8" r="3.3" fill="rgba(51,153,0,.15)" stroke="#3a9a10" stroke-width="1"/>
<circle cx="982.2" cy="323.8" r="3.3" fill="rgba(51,153,0,.15)" stroke="#3a9a10" stroke-width="1"/>
<circle cx="998.9" cy="329.8" r="3.3" fill="rgba(51,153,0,.15)" stroke="#3a9a10" stroke-width="1"/>
<circle cx="1015.5" cy="334.7" r="3.3" fill="rgba(51,153,0,.15)" stroke="#3a9a10" stroke-width="1"/>
<circle cx="1032.1" cy="346.7" r="3.3" fill="rgba(51,153,0,.15)" stroke="#3a9a10" stroke-width="1"/>
<circle cx="1048.8" cy="346.7" r="3.3" fill="rgba(51,153,0,.15)" stroke="#3a9a10" stroke-width="1"/>
<circle cx="1065.4" cy="346.7" r="3.3" fill="rgba(51,153,0,.15)" stroke="#3a9a10" stroke-width="1"/>
<circle cx="1082.0" cy="346.7" r="3.3" fill="rgba(51,153,0,.15)" stroke="#3a9a10" stroke-width="1"/>
<circle cx="1098.6" cy="346.7" r="3.3" fill="rgba(51,153,0,.15)" stroke="#3a9a10" stroke-width="1"/>
<circle cx="1115.2" cy="346.6" r="3.3" fill="rgba(51,153,0,.15)" stroke="#3a9a10" stroke-width="1"/>
<circle cx="1131.9" cy="351.3" r="3.3" fill="rgba(51,153,0,.15)" stroke="#3a9a10" stroke-width="1"/>
<circle cx="1148.5" cy="351.0" r="3.3" fill="rgba(51,153,0,.15)" stroke="#3a9a10" stroke-width="1"/>
<circle cx="1165.1" cy="362.6" r="3.3" fill="rgba(51,153,0,.15)" stroke="#3a9a10" stroke-width="1"/>
<circle cx="1181.8" cy="362.6" r="3.3" fill="rgba(51,153,0,.15)" stroke="#3a9a10" stroke-width="1"/>
<circle cx="1198.4" cy="362.6" r="3.3" fill="rgba(51,153,0,.15)" stroke="#3a9a10" stroke-width="1"/>
<circle cx="1215.0" cy="362.6" r="3.3" fill="rgba(51,153,0,.15)" stroke="#3a9a10" stroke-width="1"/>
<circle cx="1231.6" cy="357.1" r="3.3" fill="rgba(51,153,0,.15)" stroke="#3a9a10" stroke-width="1"/>
<circle cx="1248.2" cy="367.2" r="3.3" fill="rgba(51,153,0,.15)" stroke="#3a9a10" stroke-width="1"/>
<circle cx="1264.9" cy="367.2" r="3.3" fill="rgba(51,153,0,.15)" stroke="#3a9a10" stroke-width="1"/>
<circle cx="1281.5" cy="367.2" r="3.3" fill="rgba(51,153,0,.15)" stroke="#3a9a10" stroke-width="1"/>
<circle cx="1298.1" cy="367.2" r="3.3" fill="rgba(51,153,0,.15)" stroke="#3a9a10" stroke-width="1"/>
<circle cx="1314.8" cy="367.2" r="3.3" fill="rgba(51,153,0,.15)" stroke="#3a9a10" stroke-width="1"/>
<circle cx="1331.4" cy="367.2" r="3.3" fill="rgba(51,153,0,.15)" stroke="#3a9a10" stroke-width="1"/>
<circle cx="1348.0" cy="367.2" r="3.3" fill="rgba(51,153,0,.15)" stroke="#3a9a10" stroke-width="1"/>
<rect x="843" y="605" width="48" height="14" fill="#777777"/>
<text x="898" y="616" font-size="14" fill="#666">Airbnb</text>
<rect x="952" y="605" width="48" height="14" fill="#339900"/>
<text x="1007" y="616" font-size="14" fill="#666">Booking.com</text>
<rect x="1102" y="605" width="48" height="14" fill="#4689bb"/>
<text x="1158" y="616" font-size="14" fill="#666">VRBO</text>
<rect x="1210" y="605" width="48" height="14" fill="#654a70"/>
<text x="1265.5" y="616" font-size="14" fill="#666">Expedia</text>
<rect x="1034" y="631" width="48" height="14" fill="#0288d1"/>
<text x="1089" y="642" font-size="14" fill="#666">Direct</text>
<path d="M1085.60,660.10 A133.3,133.3 0 1 1 1067.45,925.46 L1076.44,860.07 A67.3,67.3 0 1 0 1085.60,726.10 Z" fill="#777777" stroke="#fff" stroke-width="2.2" stroke-linejoin="miter"/>
<path d="M1067.45,925.46 A133.3,133.3 0 0 1 1001.48,896.80 L1043.13,845.61 A67.3,67.3 0 0 0 1076.44,860.07 Z" fill="#339900" stroke="#fff" stroke-width="2.2" stroke-linejoin="miter"/>
<path d="M1001.48,896.80 A133.3,133.3 0 0 1 960.00,838.04 L1022.19,815.94 A67.3,67.3 0 0 0 1043.13,845.61 Z" fill="#4689bb" stroke="#fff" stroke-width="2.2" stroke-linejoin="miter"/>
<path d="M960.00,838.04 A133.3,133.3 0 0 1 988.18,702.42 L1036.41,747.46 A67.3,67.3 0 0 0 1022.19,815.94 Z" fill="#654a70" stroke="#fff" stroke-width="2.2" stroke-linejoin="miter"/>
<path d="M988.18,702.42 A133.3,133.3 0 0 1 1085.60,660.10 L1085.60,726.10 A67.3,67.3 0 0 0 1036.41,747.46 Z" fill="#0288d1" stroke="#fff" stroke-width="2.2" stroke-linejoin="miter"/>
</svg>

</body></html>
